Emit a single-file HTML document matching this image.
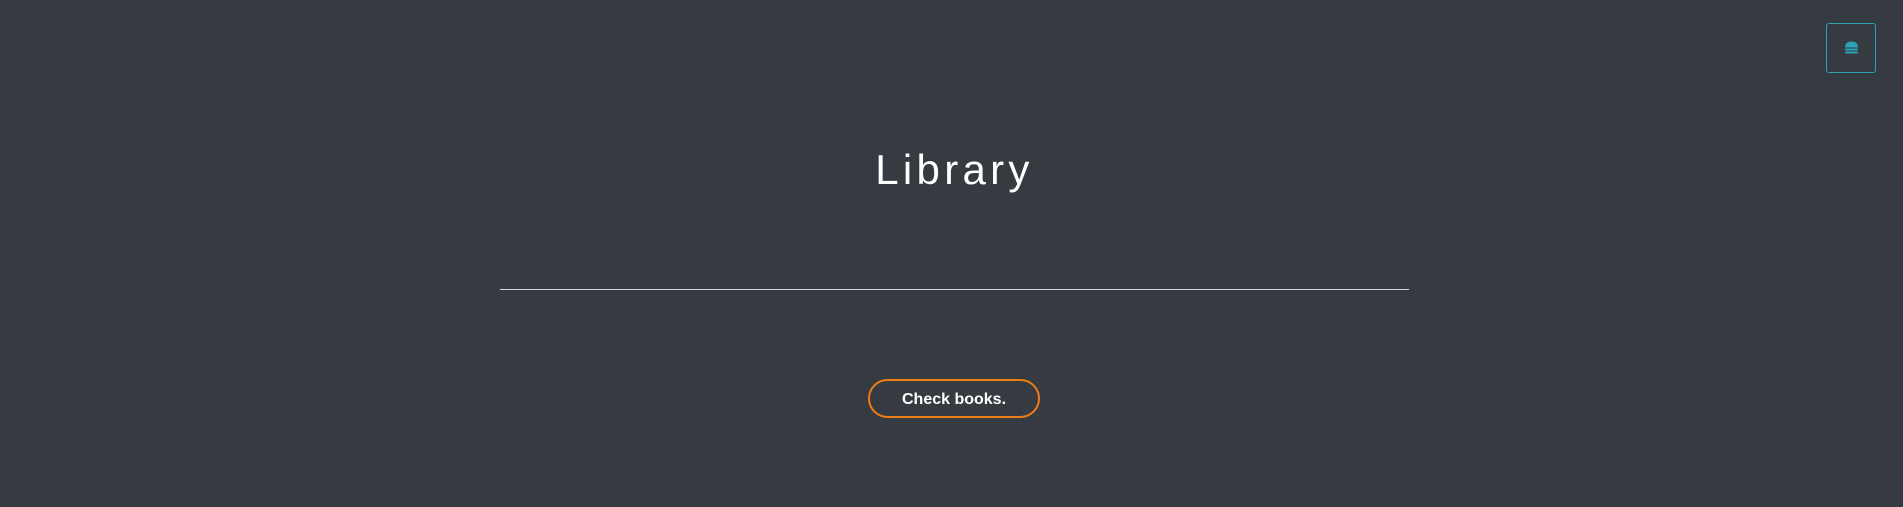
<!DOCTYPE html>
<html><head><style>
html,body{margin:0;padding:0;width:1903px;height:507px;background:#363a41;overflow:hidden;font-family:"Liberation Sans",sans-serif;}
.menu{position:absolute;left:1826px;top:23px;width:48px;height:48px;border:1px solid #2aa3b5;border-radius:3px;}
h1{position:absolute;left:3px;width:1903px;top:145px;margin:0;text-align:center;color:#fff;font-weight:400;font-size:42px;letter-spacing:4.3px;line-height:50px;}
.line{position:absolute;left:500px;top:289px;width:909px;height:1px;background:#d8d8d8;}
.btn{position:absolute;left:868px;top:379px;width:168px;height:35px;border:2px solid #f07c16;border-radius:20px;color:#fff;font-weight:700;font-size:16px;line-height:37px;text-align:center;}
</style></head><body>
<div class="menu"><svg width="48" height="48" viewBox="0 0 48 48" style="position:absolute;left:0;top:0">
<path d="M18 23.5 Q18 17.5 24.5 17.5 Q31 17.5 31 23.5 Z" fill="#2aa3b5"/>
<rect x="18" y="24.5" width="13" height="2" rx="1" fill="#2aa3b5"/>
<rect x="18" y="27.5" width="13" height="2" rx="1" fill="#2aa3b5"/>
</svg></div>
<h1>Library</h1>
<div class="line"></div>
<div class="btn">Check books.</div>
</body></html>
